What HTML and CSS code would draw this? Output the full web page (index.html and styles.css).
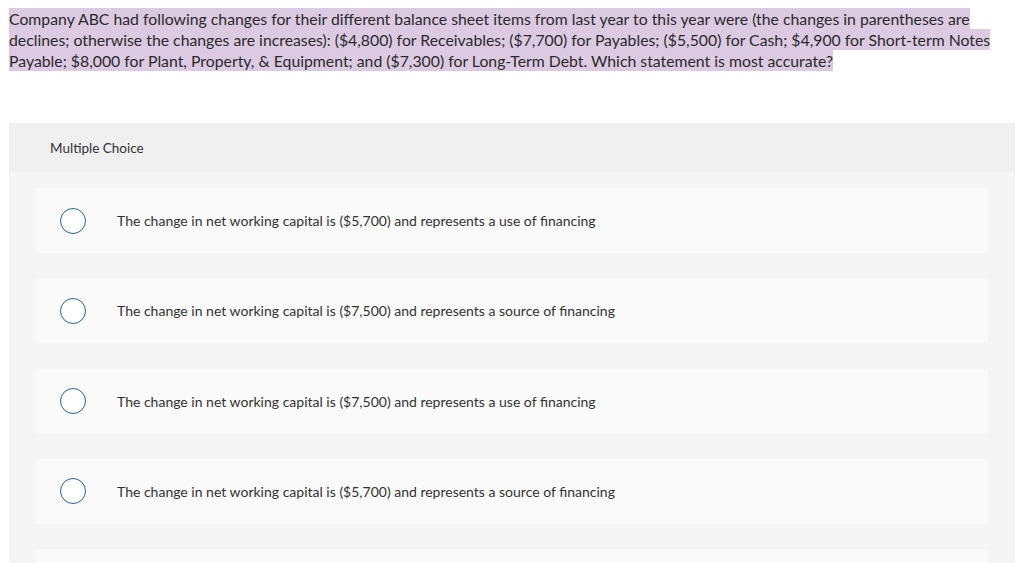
FILE: index.html
```html
<!DOCTYPE html>
<html>
<head>
<meta charset="utf-8">
<link rel="stylesheet" href="styles.css">
</head>
<body>
<p class="question"><span class="hl">Company ABC had following changes for their different balance sheet items from last year to this year were (the changes in parentheses are<br>declines; otherwise the changes are increases): ($4,800) for Receivables; ($7,700) for Payables; ($5,500) for Cash; $4,900 for Short-term Notes<br>Payable; $8,000 for Plant, Property, &amp; Equipment; and ($7,300) for Long-Term Debt. Which statement is most accurate?</span></p>

<section class="panel">
  <div class="panel-head">Multiple Choice</div>
  <div class="panel-body">
    <div class="option"><span class="radio"></span><span class="label">The change in net working capital is ($5,700) and represents a use of financing</span></div>
    <div class="option"><span class="radio"></span><span class="label">The change in net working capital is ($7,500) and represents a source of financing</span></div>
    <div class="option"><span class="radio"></span><span class="label">The change in net working capital is ($7,500) and represents a use of financing</span></div>
    <div class="option"><span class="radio"></span><span class="label">The change in net working capital is ($5,700) and represents a source of financing</span></div>
    <div class="option option-partial"></div>
  </div>
</section>
</body>
</html>
```

FILE: styles.css
```css
html, body {
  margin: 0;
  padding: 0;
  background: #ffffff;
  overflow: hidden;
}
body {
  padding: 8px 9px 0 9px;
  font-family: Lato, "Open Sans", sans-serif;
  color: #333333;
}
.question {
  margin: 0;
  font-size: 15.8px;
  line-height: 21px;
  color: #2b2b2b;
}
.hl {
  background: #dccae2;
  padding: 1px 0;
}
.panel {
  margin-top: 52px;
  background: #f5f5f5;
  border-radius: 3px 3px 0 0;
  width: 1006px;
}
.panel-head {
  height: 49px;
  background: #f0f0f0;
  border-radius: 3px 3px 0 0;
  display: flex;
  align-items: center;
  padding-left: 41px;
  font-size: 13.5px;
  color: #333333;
}
.panel-body {
  padding: 16px 27px 0 26px;
  display: flex;
  flex-direction: column;
  gap: 25.3px;
}
.option {
  height: 65px;
  background: #fafafa;
  border-radius: 3px;
  display: flex;
  align-items: center;
  padding-left: 25px;
}
.radio {
  width: 24px;
  height: 24px;
  border: 1.3px solid #2c5f9b;
  border-radius: 50%;
  background: #ffffff;
  flex: none;
}
.label {
  margin-left: 31px;
  font-size: 14px;
  color: #333333;
}
```
